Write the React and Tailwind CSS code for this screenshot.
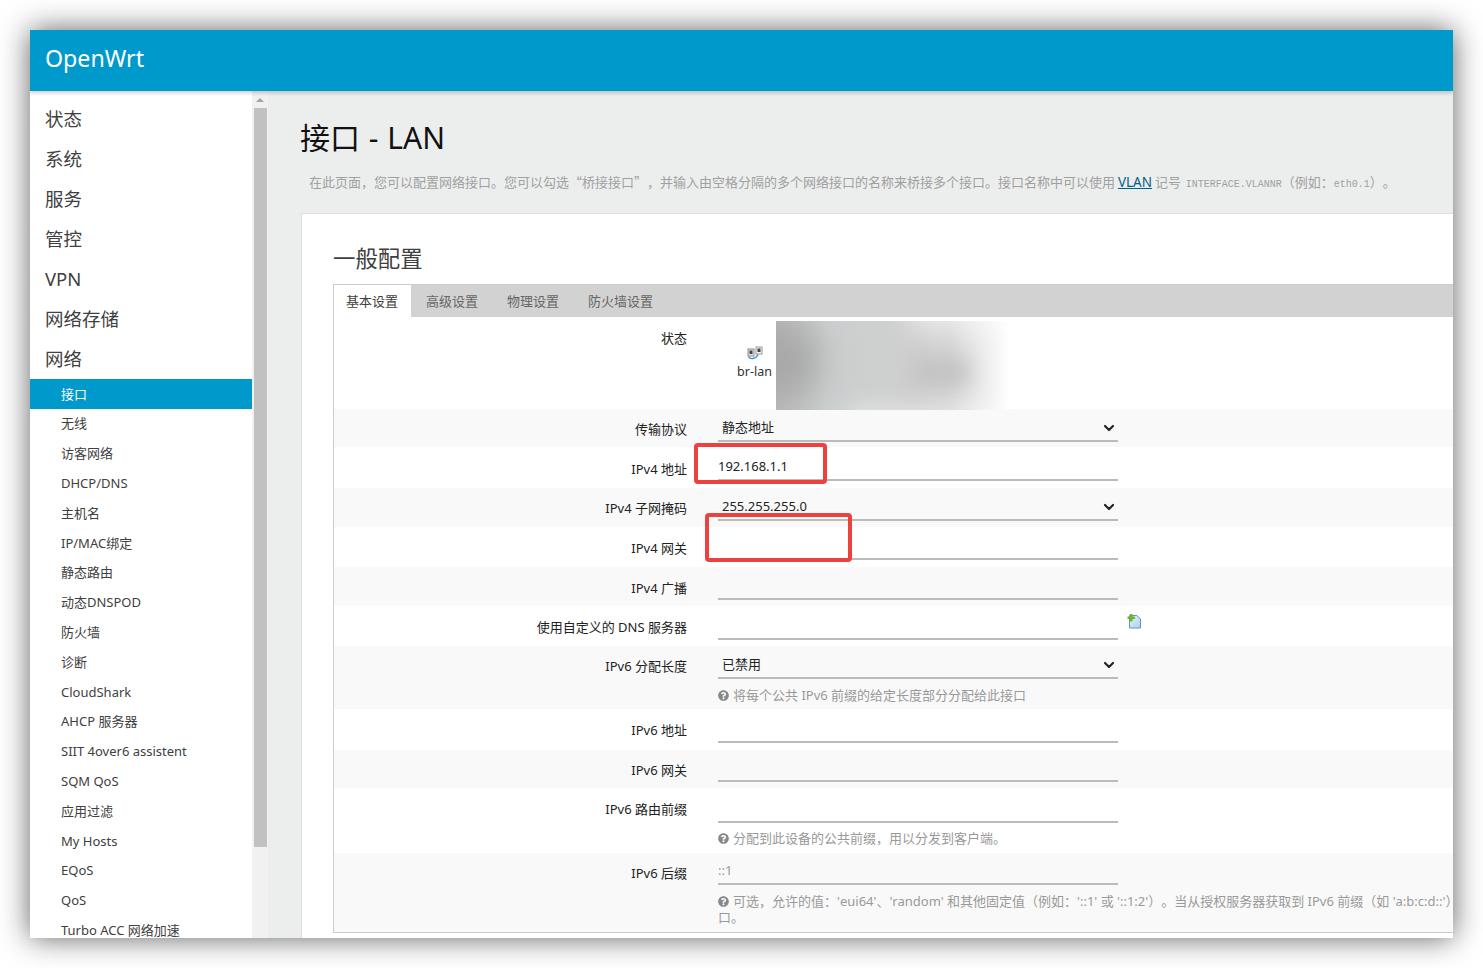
import React from "react";
import { FaQuestionCircle } from "react-icons/fa";
import { ChevronDown } from "lucide-react";

const FONT = "font-['Noto_Sans','Noto_Sans_CJK_SC',sans-serif]";
const CJK = "font-['Noto_Sans_CJK_SC','Noto_Sans',sans-serif] [text-spacing-trim:space-all]";
const LATIN = "font-['Noto_Sans',sans-serif]";
const MONO = "font-['Liberation_Mono',monospace] text-[10px]";

const top = ["状态", "系统", "服务", "管控", "VPN", "网络存储", "网络"];
const subs = ["接口", "无线", "访客网络", "DHCP/DNS", "主机名", "IP/MAC绑定", "静态路由", "动态DNSPOD", "防火墙", "诊断", "CloudShark", "AHCP 服务器", "SIIT 4over6 assistent", "SQM QoS", "应用过滤", "My Hosts", "EQoS", "QoS", "Turbo ACC 网络加速"];

function Sidebar() {
  return (
    <aside className="w-[222px] shrink-0 bg-white overflow-hidden pt-[8px]">
      {top.map((t) => (
        <div key={t} className="h-[40px] flex items-center pl-[15px] text-[18.5px] text-[#404040]">{t}</div>
      ))}
      {subs.map((s, i) => (
        <div key={s} className={`h-[29.8px] shrink-0 flex items-center pl-[31px] pt-[1px] text-[13px] ${i === 0 ? "bg-[#0099cc] text-white" : "text-[#404040]"}`}>{s}</div>
      ))}
    </aside>
  );
}

function Scrollbar() {
  return (
    <div className="w-[16px] shrink-0 bg-[#f1f1f1] flex flex-col items-center">
      <div className="h-[17px] w-full flex justify-center items-center">
        <div className="w-0 h-0 border-x-[4px] border-x-transparent border-b-[4px] border-b-[#a3a3a3]" />
      </div>
      <div className="h-[739px] w-[13px] bg-[#c1c1c1] ml-[1px]" />
    </div>
  );
}

function Help({ children, className = "" }) {
  return (
    <div className={`text-[13px] leading-[16px] text-[#999] whitespace-nowrap ${className}`}>
      <FaQuestionCircle className="inline-block w-[11px] h-[11px] mr-[4px] text-[#888] align-[-1px]" />
      {children}
    </div>
  );
}

function Field({ value, select, muted, h, textTop = "pt-[9px]" }) {
  return (
    <div className={`${h} ${textTop} w-[400px] border-b-2 border-[#bbb] flex items-start justify-between text-[13px] leading-[18px] ${select ? "pl-[4px]" : ""} ${muted ? "text-[#999]" : "text-[#222]"}`}>
      <span>{value}</span>
      {select && <ChevronDown className="w-[16px] h-[16px] mt-[2px] mr-[1px] text-[#222]" strokeWidth={3.2} />}
    </div>
  );
}

function Row({ label, h, alt, labelTop, children, field }) {
  return (
    <div className={`flex ${h} ${alt ? "bg-[#f9f9f9]" : "bg-white"}`}>
      <div className={`w-[353px] shrink-0 text-right text-[13px] leading-[18px] text-[#222] ${labelTop}`}>{label}</div>
      <div className="ml-[31px]">{field}</div>
      {children}
    </div>
  );
}

function PortIcon() {
  return (
    <svg width="16" height="14" viewBox="0 0 16 14" className="block">
      <rect x="1" y="3" width="6" height="7" fill="#e6e6e6" stroke="#8a8a8a" />
      <rect x="9" y="1" width="6" height="7" fill="#f2f2f2" stroke="#9a9a9a" />
      <rect x="2.5" y="4.5" width="3" height="3.5" fill="#444" />
      <rect x="10.5" y="2.5" width="3" height="3.5" fill="#444" />
      <path d="M1.5 10.5 C3 14 9 13 11 8.5" fill="none" stroke="#3f8fcf" strokeWidth="1.3" />
    </svg>
  );
}

function AddIcon() {
  return (
    <svg width="15" height="15" viewBox="0 0 15 15" className="block">
      <defs>
        <linearGradient id="pg" x1="0" y1="0" x2="1" y2="1">
          <stop offset="0" stopColor="#e4f3fd" />
          <stop offset="1" stopColor="#a5d4f5" />
        </linearGradient>
      </defs>
      <path d="M2.5 1.5 H10 L13.5 5 V14 H2.5 Z" fill="url(#pg)" stroke="#6f93ad" />
      <path d="M3 0 H5.5 V2.5 H8 V5 H5.5 V7.5 H3 V5 H0.5 V2.5 H3 Z" fill="#6cb52f" />
    </svg>
  );
}

function Blurred() {
  return (
    <div className="ml-[1px] mt-[4px] w-[234px] h-[89px] overflow-hidden relative bg-[linear-gradient(90deg,#bcbcbc_0%,#cdd0d0_22%,#cfcfcf_60%,#d4d4d4_74%,#ffffff_100%)]">
      <div className="absolute -left-[40px] top-[0px] w-[85px] h-[80px] rounded-full bg-[#a8a8a8] blur-[18px]" />
      <div className="absolute left-[135px] top-[38px] w-[60px] h-[26px] rounded-full bg-[#c2c2c2] blur-[10px]" />
      <div className="absolute left-[130px] -top-[26px] w-[150px] h-[36px] rounded-full bg-white opacity-50 blur-[12px]" />
      <div className="absolute left-[70px] top-[84px] w-[180px] h-[24px] rounded-full bg-white opacity-40 blur-[10px]" />
    </div>
  );
}

function Form() {
  return (
    <div className="border border-[#ccc] w-[1200px] bg-white">
      <div className="h-[32px] bg-[#d2d2d2] flex text-[13px] leading-[32px] text-[#666]">
        <div className="bg-white pl-[12px] pr-[13px] text-[#404040]">基本设置</div>
        <div className="px-[15px]">高级设置</div>
        <div className="pl-[14px] pr-[15px]">物理设置</div>
        <div className="pl-[14px]">防火墙设置</div>
      </div>
      <div className="flex h-[92px] bg-white">
        <div className="w-[353px] shrink-0 text-right text-[13px] leading-[18px] text-[#222] pt-[12px]">状态</div>
        <div className="ml-[47px] w-[41px] flex flex-col items-center pt-[29px]">
          <PortIcon />
          <div className="text-[12.5px] leading-[16px] text-[#333] mt-[4px]">br-lan</div>
        </div>
        <Blurred />
      </div>
      <Row alt h="h-[38px]" label="传输协议" labelTop="pt-[11px]" field={<Field select value="静态地址" h="h-[33px]" />} />
      <Row h="h-[41px]" label="IPv4 地址" labelTop="pt-[13px]" field={<Field value="192.168.1.1" h="h-[34px]" textTop="pt-[10px]" />} />
      <Row alt h="h-[39px]" label="IPv4 子网掩码" labelTop="pt-[11px]" field={<Field select value="255.255.255.0" h="h-[33px]" />} />
      <Row h="h-[40px]" label="IPv4 网关" labelTop="pt-[12px]" field={<Field h="h-[33px]" />} />
      <Row alt h="h-[39px]" label="IPv4 广播" labelTop="pt-[12px]" field={<Field h="h-[33px]" />} />
      <Row h="h-[40px]" label="使用自定义的 DNS 服务器" labelTop="pt-[12px]" field={<Field h="h-[34px]" />}>
        <div className="ml-[9px] mt-[8px]"><AddIcon /></div>
      </Row>
      <Row alt h="h-[63px]" label="IPv6 分配长度" labelTop="pt-[11px]" field={<><Field select value="已禁用" h="h-[33px]" /><Help className="pt-[8px]">将每个公共 IPv6 前缀的给定长度部分分配给此接口</Help></>} />
      <Row h="h-[41px]" label="IPv6 地址" labelTop="pt-[12px]" field={<Field h="h-[34px]" />} />
      <Row alt h="h-[38px]" label="IPv6 网关" labelTop="pt-[11px]" field={<Field h="h-[32px]" />} />
      <Row h="h-[65px]" label="IPv6 路由前缀" labelTop="pt-[12px]" field={<><Field h="h-[35px]" /><Help className="pt-[7px]">分配到此设备的公共前缀，用以分发到客户端。</Help></>} />
      <div className="flex bg-[#f9f9f9] h-[79px]">
        <div className="w-[353px] shrink-0 text-right text-[13px] leading-[18px] text-[#222] pt-[11px]">IPv6 后缀</div>
        <div className="ml-[31px]">
          <Field muted value="::1" h="h-[32px]" textTop="pt-[8px]" />
          <Help className="pt-[8px]">可选，允许的值：'eui64'、'random' 和其他固定值（例如：'::1' 或 '::1:2'）。当从授权服务器获取到 IPv6 前缀（如 'a:b:c:d::'）<br />口。</Help>
        </div>
      </div>
    </div>
  );
}

function Main() {
  return (
    <main className="flex-1 min-w-0 overflow-hidden bg-[#eceeee] pl-[33px]">
      <h1 className="-ml-[1px] text-[30px] leading-[40px] font-normal text-[#111] pt-[27px] h-[67px] box-content whitespace-nowrap [word-spacing:1px]">接口 - LAN</h1>
      <div className={`${CJK} pl-[8px] h-[30px] text-[13px] leading-[22px] text-[#a0a0a0] whitespace-nowrap -mt-[14px]`}>
        在此页面，您可以配置网络接口。您可以勾选“桥接接口”，并输入由空格分隔的多个网络接口的名称来桥接多个接口。接口名称中可以使用 <a className={`${LATIN} text-[13.5px] text-[#005f87] underline`}>VLAN</a> 记号 <span className={`${MONO} ml-[2px]`}>INTERFACE.VLANNR</span>（例如：<span className={MONO}>eth0.1</span>）。
      </div>
      <section className="mt-[12px] w-[1300px] h-[800px] bg-white border border-[#dddddd] pl-[31px] pt-[28px]">
        <h2 className="text-[22.4px] leading-[34px] font-normal text-[#404040] h-[42px]">一般配置</h2>
        <Form />
      </section>
    </main>
  );
}

export default function App() {
  return (
    <div className={`${FONT} [text-spacing-trim:space-all] bg-white w-[1483px] h-[968px] overflow-hidden pt-[30px] pl-[30px]`}>
      <div className="relative w-[1423px] h-[908px] flex flex-col shadow-[0_0_28px_rgba(0,0,0,0.62)] overflow-hidden">
        <header className="relative z-10 h-[61px] shrink-0 bg-[#0099cc] text-white text-[23.2px] flex items-center pl-[15px] pb-[4px] shadow-[0_2px_4px_rgba(0,0,0,0.2)]">OpenWrt</header>
        <div className="flex flex-1 min-h-0">
          <Sidebar />
          <Scrollbar />
          <Main />
        </div>
        <div className="absolute left-[664px] top-[413px] w-[133px] h-[41px] border-[4px] border-[#ef4040] rounded-[4px]" />
        <div className="absolute left-[675px] top-[483px] w-[147px] h-[49px] border-[4px] border-[#ef4040] rounded-[4px]" />
      </div>
    </div>
  );
}
